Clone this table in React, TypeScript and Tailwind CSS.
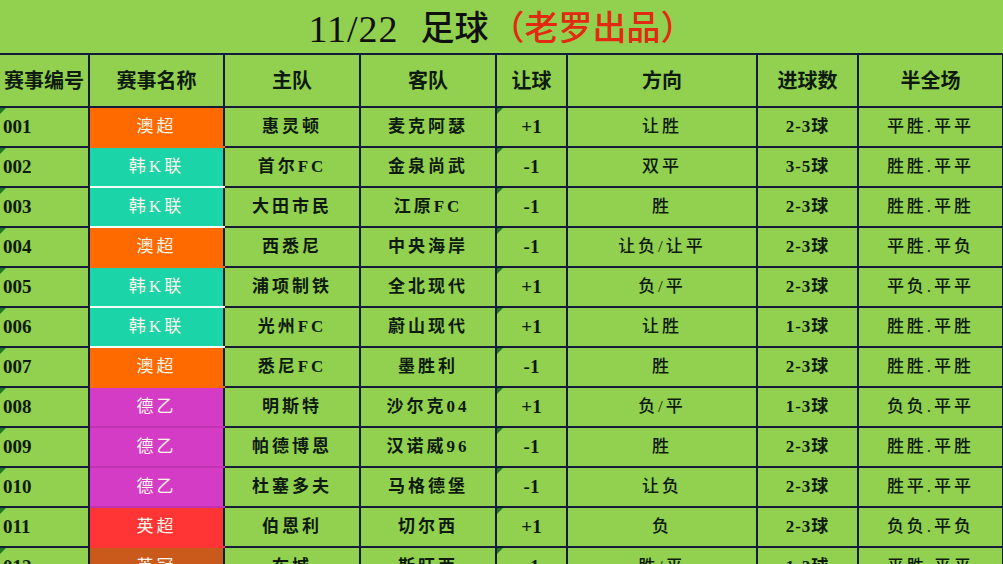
import React from "react";

const FONT = { fontFamily: '"Liberation Serif", "Noto Sans CJK SC", serif' };

type Row = [string, string, string, string, string, string, string, string];

const rows: Row[] = [
  ["001", "澳超", "惠灵顿", "麦克阿瑟", "+1", "让胜", "2-3球", "平胜.平平"],
  ["002", "韩K联", "首尔FC", "金泉尚武", "-1", "双平", "3-5球", "胜胜.平平"],
  ["003", "韩K联", "大田市民", "江原FC", "-1", "胜", "2-3球", "胜胜.平胜"],
  ["004", "澳超", "西悉尼", "中央海岸", "-1", "让负/让平", "2-3球", "平胜.平负"],
  ["005", "韩K联", "浦项制铁", "全北现代", "+1", "负/平", "2-3球", "平负.平平"],
  ["006", "韩K联", "光州FC", "蔚山现代", "+1", "让胜", "1-3球", "胜胜.平胜"],
  ["007", "澳超", "悉尼FC", "墨胜利", "-1", "胜", "2-3球", "胜胜.平胜"],
  ["008", "德乙", "明斯特", "沙尔克04", "+1", "负/平", "1-3球", "负负.平平"],
  ["009", "德乙", "帕德博恩", "汉诺威96", "-1", "胜", "2-3球", "胜胜.平胜"],
  ["010", "德乙", "杜塞多夫", "马格德堡", "-1", "让负", "2-3球", "胜平.平平"],
  ["011", "英超", "伯恩利", "切尔西", "+1", "负", "2-3球", "负负.平负"],
  ["012", "英冠", "布城", "斯旺西", "-1", "胜/平", "1-2球", "平胜.平平"],
];

const leagueStyle: Record<string, string> = {
  "澳超": "bg-[#ff6a00] border-b-[#ff6a00]",
  "韩K联": "bg-[#1bd4a8] border-b-[#f4fff8]",
  "德乙": "bg-[#d53cc6] border-b-[#c233b4]",
  "英超": "bg-[#ff3434] border-b-[#ff3434]",
  "英冠": "bg-[#c95a1b] border-b-[#c95a1b]",
};

const widths = [89, 135, 136, 136, 71, 190, 101, 145];
const headers = ["赛事编号", "赛事名称", "主队", "客队", "让球", "方向", "进球数", "半全场"];

function Tri() {
  return (
    <span className="absolute left-0 top-0 w-0 h-0 border-t-[6px] border-r-[6px] border-t-[#1f7a1f] border-r-transparent" />
  );
}

export default function App() {
  return (
    <div className="w-[1003px] h-[564px] overflow-hidden bg-[#92d050] text-[#0d1a0d]" style={FONT}>
      <div className="h-[53px] flex items-center justify-center pl-[0px] pt-[4px]">
        <span className="text-[38px] leading-none font-normal text-[#101010] tracking-[1px]">11/22</span>
        <span className="text-[34px] leading-none font-medium text-[#101010] ml-[22px]">足球</span>
        <span className="text-[34px] leading-none font-medium text-[#e22a12] ml-[2px]">（老罗出品）</span>
      </div>
      <table className="table-fixed border-collapse w-[1003px]">
        <colgroup>
          {widths.map((w, i) => (
            <col key={i} style={{ width: w }} />
          ))}
        </colgroup>
        <thead>
          <tr className="h-[53px]">
            {headers.map((h, i) => (
              <th
                key={i}
                className={`border-2 border-[#141c3a] ${i === 0 ? "border-l-0 px-0" : ""} text-[20px] font-bold text-center tracking-[0px] p-0`}
              >
                {h}
              </th>
            ))}
          </tr>
        </thead>
        <tbody>
          {rows.map((r, ri) => (
            <tr key={ri} className="h-[40px]">
              <td className="relative border-2 border-l-0 border-[#141c3a] text-left pl-[3px] text-[19px] font-bold p-0">
                <Tri />
                {r[0]}
              </td>
              <td
                className={`border-2 border-[#141c3a] border-b-2 ${leagueStyle[r[1]]} text-center text-[17px] font-normal text-[#fff4ea] tracking-[3px] p-0`}
              >
                {r[1]}
              </td>
              <td className="border-2 border-[#141c3a] text-center text-[17px] font-semibold tracking-[3px] p-0">
                {r[2]}
              </td>
              <td className="border-2 border-[#141c3a] text-center text-[17px] font-semibold tracking-[3px] p-0">
                {r[3]}
              </td>
              <td className="relative border-2 border-[#141c3a] text-center text-[19px] font-bold p-0">
                <Tri />
                {r[4]}
              </td>
              <td className="border-2 border-[#141c3a] text-center text-[17px] font-medium tracking-[3px] p-0">
                {r[5]}
              </td>
              <td className="border-2 border-[#141c3a] text-center text-[17px] font-semibold tracking-[1px] p-0">
                {r[6]}
              </td>
              <td className="border-2 border-[#141c3a] text-center text-[17px] font-medium tracking-[3px] p-0">
                {r[7]}
              </td>
            </tr>
          ))}
        </tbody>
      </table>
    </div>
  );
}
